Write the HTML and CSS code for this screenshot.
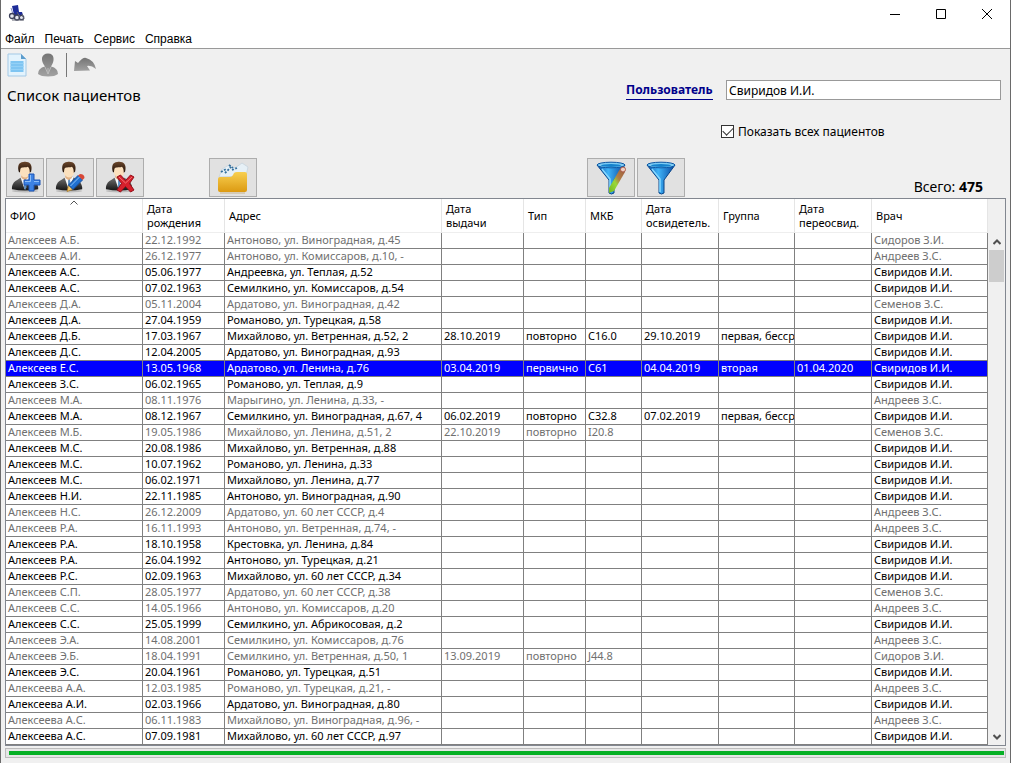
FILE: index.html
```html
<!DOCTYPE html>
<html lang="ru">
<head>
<meta charset="utf-8">
<title>Список пациентов</title>
<link rel="stylesheet" href="styles.css">
</head>
<body>
<svg class="defs" aria-hidden="true">
  <defs>
    <linearGradient id="suit" x1="0" y1="0" x2="0" y2="1"><stop offset="0" stop-color="#777"/><stop offset="1" stop-color="#151515"/></linearGradient>
    <linearGradient id="hair" x1="0" y1="0" x2="0" y2="1"><stop offset="0" stop-color="#6a452a"/><stop offset="1" stop-color="#1d0f07"/></linearGradient>
    <linearGradient id="blue" x1="0" y1="0" x2="1" y2="0"><stop offset="0" stop-color="#0b4fa8"/><stop offset=".4" stop-color="#3fb4f8"/><stop offset="1" stop-color="#0746a0"/></linearGradient>
    <linearGradient id="folder" x1="0" y1="0" x2="0" y2="1"><stop offset="0" stop-color="#f8cf50"/><stop offset="1" stop-color="#dc9a12"/></linearGradient>
    <linearGradient id="gray" x1="0" y1="0" x2="0" y2="1"><stop offset="0" stop-color="#747474"/><stop offset="1" stop-color="#a2a2a2"/></linearGradient>
    <linearGradient id="stick" x1="1" y1="0" x2="0" y2="1"><stop offset="0" stop-color="#a05a3c"/><stop offset=".4" stop-color="#b08048"/><stop offset=".6" stop-color="#98d838"/><stop offset="1" stop-color="#70b820"/></linearGradient>
    <symbol id="person" viewBox="0 0 32 34">
      <ellipse cx="15" cy="32" rx="14" ry="1.500" fill="#bbb"/>
      <path d="M1 30V28Q2 22 7 20L12 16.500H18L23 19Q28 22 29 28V30Q15 33 1 30Z" fill="url(#suit)"/>
      <path d="M10 17L14.500 30L20 17Z" fill="#f4f8fc"/>
      <path d="M14 19H16L16.500 28L15 31L13.800 28Z" fill="#5f8fc0"/>
      <path d="M11 14H18V18L14.500 20.500L11 18Z" fill="#e2b184"/>
      <ellipse cx="15" cy="10.500" rx="5.700" ry="7" fill="#fbe0bd"/>
      <path d="M8.500 12C6.500 6 8 1.200 13 1C19 0 23.500 3 21.500 11L20 12.500C20 9 19.500 7 18 6C14 7.500 11 5.500 10 8.500L9.500 12Z" fill="url(#hair)"/>
    </symbol>
    <symbol id="funnel" viewBox="0 0 32 34">
      <path d="M2 4L14 19V32Q16.500 34 19 32V19L30 4Z" fill="url(#blue)" stroke="#084488"/>
      <path d="M7 8L15 18V31" fill="none" stroke="#86d8ff" stroke-width="1.500"/>
      <ellipse cx="16" cy="4" rx="14" ry="2.800" fill="#7cccf4" stroke="#0c56a4"/>
      <ellipse cx="16" cy="4.500" rx="10" ry="1.500" fill="#1682cc"/>
    </symbol>
  </defs>
</svg>
<div class="window">
  <header class="titlebar">
    <svg class="logo" viewBox="0 0 18 18" aria-hidden="true"><path d="M4 1L10 0L11 7H14L15 10H6Z" fill="#1d2b98"/><path d="M3 3L5 9" stroke="#8b93c8"/><g fill="#e4e6ee" stroke="#3b3f58" stroke-width="1.300"><circle cx="4" cy="11" r="2.500"/><circle cx="9" cy="12.500" r="2.500"/><circle cx="13.500" cy="12.500" r="2.200"/></g><path d="M4 15H16M9 7L12 12M14 9L16 14" stroke="#626573"/></svg>
    <div class="controls">
      <button aria-label="Свернуть"><svg viewBox="0 0 12 12"><path d="M1 6.500H11" stroke="#000" fill="none"/></svg></button>
      <button aria-label="Развернуть"><svg viewBox="0 0 12 12"><path d="M1.500 1.500H10.500V10.500H1.500Z" stroke="#000" fill="none"/></svg></button>
      <button aria-label="Закрыть"><svg viewBox="0 0 12 12"><path d="M1 1L11 11M11 1L1 11" stroke="#000" fill="none"/></svg></button>
    </div>
  </header>
  <nav class="menu"><button>Файл</button><button>Печать</button><button>Сервис</button><button>Справка</button></nav>
  <section class="top">
    <div>
      <div class="toolbar">
        <button aria-label="Новый документ"><svg width="20" height="24" viewBox="0 0 20 24"><path d="M1 1H14L19 6V23H1Z" fill="#e3f3fd" stroke="#a3c9e6"/><path d="M3.500 8H16.500V19H3.500Z" fill="#7fc5f2"/><path d="M3.500 10.500H16.500M3.500 13.500H16.500M3.500 16.500H16.500" stroke="#93d0f6"/><path d="M14 1V6H19Z" fill="#5c9ccc"/></svg></button>
        <button aria-label="Пациент"><svg width="22" height="24" viewBox="0 0 22 24"><path d="M1 21Q1 15 8 13.500Q4.500 9 5 5Q6 .500 11 .500Q16 .500 16.500 5Q17 9 14 13.500Q21 15 21 21Q18 23.500 11 23.500Q4 23.500 1 21Z" fill="url(#gray)"/><path d="M8 14L11 21L14 14M11 15V21" stroke="#bbb" fill="none"/></svg></button>
        <span class="divider"></span>
        <button aria-label="Отменить"><svg width="24" height="18" viewBox="0 0 24 18"><path d="M1 15L2 5L5 7Q10 1 13 2Q21 4 23 13Q18 9 14 10L17 14.500Z" fill="url(#gray)"/></svg></button>
      </div>
      <h1>Список пациентов</h1>
    </div>
    <div class="filters">
      <div class="user"><a href="#user" id="user-label">Пользователь</a><input type="text" id="user" value="Свиридов И.И." aria-labelledby="user-label"></div>
      <label class="check"><input type="checkbox" checked><span>Показать всех пациентов</span></label>
    </div>
  </section>
  <section class="actions">
    <button class="narrow" aria-label="Добавить пациента"><svg viewBox="0 0 32 34"><use href="#person" x="2" y="0" width="30" height="32"/><path d="M20 13H25V19H31V24H25V30H20V24H15V19H20Z" fill="#3c82e4" stroke="#1c55b4"/><path d="M21.500 14V20.500H16M25 20.500H30" stroke="#8bbcf8" fill="none"/></svg></button>
    <button aria-label="Изменить пациента"><svg viewBox="0 0 32 34"><use href="#person" x="1" y="0" width="30" height="32"/><path d="M13 30.500L14.500 24L19 28.500Z" fill="#f4ca72" stroke="#a27424" stroke-width=".7"/><path d="M14.500 24L24 14.500L28.500 19L19 28.500Z" fill="#2070d0" stroke="#164fa0"/><path d="M16.500 25L26 15.500" stroke="#8bc4f8"/><path d="M24 14.500L26 13Q30.500 13 30.500 17L28.500 19Z" fill="#d84838"/></svg></button>
    <button aria-label="Удалить пациента"><svg viewBox="0 0 32 34"><use href="#person" x="1" y="0" width="30" height="32"/><path d="M13 16L16.500 14L21.500 19.500L26.500 14L30 16L25.500 22.500L30 29L26.500 31L21.500 25.500L16.500 31L13 29L17.500 22.500Z" fill="#d6202c" stroke="#94101a"/><path d="M15 16L21.500 22L28 16" stroke="#f27474" fill="none"/></svg></button>
    <button class="folder" aria-label="Папка"><svg viewBox="0 0 32 34"><path d="M2 16L5 8L12 4L18 7L25 2L31 6L29 15Z" fill="#e6f0f6" stroke="#cdd8e0"/><path d="M4 11L9 8M8 12L14 6M15 9L20 7M12 4L16 7" stroke="#356f9c" stroke-width="1.800" stroke-dasharray="2 1.500"/><path d="M1 18Q1 16 3 16H13Q15 16 16 14L17 12Q18 11 20 11H28Q30 11 30 13V29Q30 31 28 31H3Q1 31 1 29Z" fill="url(#folder)"/><path d="M3 32H28" stroke="#c8b48b"/></svg></button>
    <button class="filter" aria-label="Изменить фильтр"><svg viewBox="0 0 32 34"><use href="#funnel"/><path d="M14 32V27L25 8L30 11L19 30Z" fill="url(#stick)"/><circle cx="28" cy="8.500" r="2.500" fill="#f0d0c4" stroke="#a85a48"/></svg></button>
    <button aria-label="Фильтр"><svg viewBox="0 0 32 34"><use href="#funnel"/></svg></button>
    <p class="total">Всего: <b>475</b></p>
  </section>
  <main class="grid">
    <table>
      <colgroup><col class="c-name"><col class="c-date"><col><col class="c-date"><col class="c-type"><col class="c-code"><col class="c-wide"><col class="c-group"><col class="c-wide"><col class="c-doctor"></colgroup>
      <thead><tr><th class="sorted">ФИО<svg viewBox="0 0 8 5"><path d="M.500 4.500L4 1L7.500 4.500" fill="none" stroke="#555"/></svg></th><th>Дата<br>рождения</th><th>Адрес</th><th>Дата<br>выдачи</th><th>Тип</th><th>МКБ</th><th>Дата<br>освидетель.</th><th>Группа</th><th>Дата<br>переосвид.</th><th>Врач</th></tr></thead>
      <tbody>
        <tr class="off"><td>Алексеев А.Б.<td>22.12.1992<td>Антоново, ул. Виноградная, д.45<td><td><td><td><td><td><td>Сидоров З.И.
        <tr class="off"><td>Алексеев А.И.<td>26.12.1977<td>Антоново, ул. Комиссаров, д.10, -<td><td><td><td><td><td><td>Андреев З.С.
        <tr><td>Алексеев А.С.<td>05.06.1977<td>Андреевка, ул. Теплая, д.52<td><td><td><td><td><td><td>Свиридов И.И.
        <tr><td>Алексеев А.С.<td>07.02.1963<td>Семилкино, ул. Комиссаров, д.54<td><td><td><td><td><td><td>Свиридов И.И.
        <tr class="off"><td>Алексеев Д.А.<td>05.11.2004<td>Ардатово, ул. Виноградная, д.42<td><td><td><td><td><td><td>Семенов З.С.
        <tr><td>Алексеев Д.А.<td>27.04.1959<td>Романово, ул. Турецкая, д.58<td><td><td><td><td><td><td>Свиридов И.И.
        <tr><td>Алексеев Д.Б.<td>17.03.1967<td>Михайлово, ул. Ветренная, д.52, 2<td>28.10.2019<td>повторно<td>C16.0<td>29.10.2019<td>первая, бессрочно<td><td>Свиридов И.И.
        <tr><td>Алексеев Д.С.<td>12.04.2005<td>Ардатово, ул. Виноградная, д.93<td><td><td><td><td><td><td>Свиридов И.И.
        <tr class="selected"><td>Алексеев Е.С.<td>13.05.1968<td>Ардатово, ул. Ленина, д.76<td>03.04.2019<td>первично<td>C61<td>04.04.2019<td>вторая<td>01.04.2020<td>Свиридов И.И.
        <tr><td>Алексеев З.С.<td>06.02.1965<td>Романово, ул. Теплая, д.9<td><td><td><td><td><td><td>Свиридов И.И.
        <tr class="off"><td>Алексеев М.А.<td>08.11.1976<td>Марыгино, ул. Ленина, д.33, -<td><td><td><td><td><td><td>Андреев З.С.
        <tr><td>Алексеев М.А.<td>08.12.1967<td>Семилкино, ул. Виноградная, д.67, 4<td>06.02.2019<td>повторно<td>C32.8<td>07.02.2019<td>первая, бессрочно<td><td>Свиридов И.И.
        <tr class="off"><td>Алексеев М.Б.<td>19.05.1986<td>Михайлово, ул. Ленина, д.51, 2<td>22.10.2019<td>повторно<td>I20.8<td><td><td><td>Семенов З.С.
        <tr><td>Алексеев М.С.<td>20.08.1986<td>Михайлово, ул. Ветренная, д.88<td><td><td><td><td><td><td>Свиридов И.И.
        <tr><td>Алексеев М.С.<td>10.07.1962<td>Романово, ул. Ленина, д.33<td><td><td><td><td><td><td>Свиридов И.И.
        <tr><td>Алексеев М.С.<td>06.02.1971<td>Михайлово, ул. Ленина, д.77<td><td><td><td><td><td><td>Свиридов И.И.
        <tr><td>Алексеев Н.И.<td>22.11.1985<td>Антоново, ул. Виноградная, д.90<td><td><td><td><td><td><td>Свиридов И.И.
        <tr class="off"><td>Алексеев Н.С.<td>26.12.2009<td>Ардатово, ул. 60 лет СССР, д.4<td><td><td><td><td><td><td>Андреев З.С.
        <tr class="off"><td>Алексеев Р.А.<td>16.11.1993<td>Антоново, ул. Ветренная, д.74, -<td><td><td><td><td><td><td>Андреев З.С.
        <tr><td>Алексеев Р.А.<td>18.10.1958<td>Крестовка, ул. Ленина, д.84<td><td><td><td><td><td><td>Свиридов И.И.
        <tr><td>Алексеев Р.А.<td>26.04.1992<td>Антоново, ул. Турецкая, д.21<td><td><td><td><td><td><td>Свиридов И.И.
        <tr><td>Алексеев Р.С.<td>02.09.1963<td>Михайлово, ул. 60 лет СССР, д.34<td><td><td><td><td><td><td>Свиридов И.И.
        <tr class="off"><td>Алексеев С.П.<td>28.05.1977<td>Ардатово, ул. 60 лет СССР, д.38<td><td><td><td><td><td><td>Семенов З.С.
        <tr class="off"><td>Алексеев С.С.<td>14.05.1966<td>Антоново, ул. Комиссаров, д.20<td><td><td><td><td><td><td>Андреев З.С.
        <tr><td>Алексеев С.С.<td>25.05.1999<td>Семилкино, ул. Абрикосовая, д.2<td><td><td><td><td><td><td>Свиридов И.И.
        <tr class="off"><td>Алексеев Э.А.<td>14.08.2001<td>Семилкино, ул. Комиссаров, д.76<td><td><td><td><td><td><td>Андреев З.С.
        <tr class="off"><td>Алексеев Э.Б.<td>18.04.1991<td>Семилкино, ул. Ветренная, д.50, 1<td>13.09.2019<td>повторно<td>J44.8<td><td><td><td>Сидоров З.И.
        <tr><td>Алексеев Э.С.<td>20.04.1961<td>Романово, ул. Турецкая, д.51<td><td><td><td><td><td><td>Свиридов И.И.
        <tr class="off"><td>Алексеева А.А.<td>12.03.1985<td>Романово, ул. Турецкая, д.21, -<td><td><td><td><td><td><td>Андреев З.С.
        <tr><td>Алексеева А.И.<td>02.03.1966<td>Ардатово, ул. Виноградная, д.80<td><td><td><td><td><td><td>Свиридов И.И.
        <tr class="off"><td>Алексеева А.С.<td>06.11.1983<td>Михайлово, ул. Виноградная, д.96, -<td><td><td><td><td><td><td>Андреев З.С.
        <tr><td>Алексеева А.С.<td>07.09.1981<td>Михайлово, ул. 60 лет СССР, д.97<td><td><td><td><td><td><td>Свиридов И.И.
      </tbody>
    </table>
    <div class="scrollbar">
      <button aria-label="Вверх"><svg viewBox="0 0 8 6"><path d="M.500 5L4 1.500L7.500 5" fill="none" stroke="#505050" stroke-width="2"/></svg></button>
      <div class="track"><div class="thumb"></div></div>
      <button aria-label="Вниз"><svg viewBox="0 0 8 6"><path d="M.500 1L4 4.500L7.500 1" fill="none" stroke="#505050" stroke-width="2"/></svg></button>
    </div>
  </main>
  <progress value="100" max="100" aria-label="Загрузка"></progress>
</div>
</body>
</html>
```
FILE: styles.css
```css
* { box-sizing: border-box; }
body { margin: 0; background: #f0f0f0; color: #000; font: 11px/14px "Noto Sans", sans-serif; }
button { margin: 0; padding: 0; border: 0; background: none; font: inherit; color: inherit; }
svg { display: block; }
.defs { position: absolute; width: 0; height: 0; }
.window { min-height: 100vh; display: flex; flex-direction: column; border: 1px solid #6a6a6a; border-top: 0; }

.titlebar { display: flex; justify-content: space-between; align-items: center; height: 27px; padding-left: 7px; background: #fff; }
.logo { width: 18px; height: 18px; }
.controls { display: flex; }
.controls button { width: 46px; height: 27px; display: grid; place-items: center; }
.controls svg { width: 12px; height: 12px; }
.menu { display: flex; gap: 10px; height: 22px; padding-left: 4px; background: #fff; border-bottom: 1px solid #999; font: 12px/24px "Liberation Sans", sans-serif; }

.top { display: flex; justify-content: space-between; height: 109px; padding: 4px 9px 0 6px; }
.toolbar { display: flex; align-items: center; height: 24px; }
.toolbar button { margin-right: 7px; }
.toolbar button + button { margin-left: 3px; }
.divider { width: 1px; height: 24px; margin-right: 6px; background: #777; }
h1 { margin: 7px 0 0; font-size: 15px; line-height: 22px; font-weight: 400; }
.filters { width: 375px; padding-top: 27px; }
.user { display: flex; align-items: center; justify-content: space-between; font-size: 12px; }
.user a { font-weight: 700; line-height: 18px; color: #00008b; text-decoration: none; border-bottom: 1px solid #00008b; }
.user input { width: 275px; height: 20px; padding: 0 2px; border: 1px solid #999; background: #fff; font: inherit; color: #000; }
.check { display: flex; align-items: center; gap: 4px; margin: 23px 0 0 95px; font-size: 12px; line-height: 17px; }
.check input { appearance: none; width: 13px; height: 13px; margin: 0; display: grid; place-items: center; border: 1px solid #333; background: #fff; }
.check input:checked::before { content: ""; width: 9px; height: 5px; margin-bottom: 3px; border: solid #333; border-width: 0 0 1px 1px; transform: rotate(-45deg); }

.actions { display: flex; gap: 2px; padding: 0 27px 0 5px; }
.actions button { width: 48px; height: 39px; display: grid; place-items: center; border: 1px solid #adadad; background: #e1e1e1; }
.actions .narrow { width: 38px; }
.actions svg { width: 32px; height: 34px; }
.actions .folder { margin-left: 63px; }
.actions .filter { margin-left: auto; }
.total { width: 296px; margin: 0; padding-top: 19px; text-align: right; font-size: 14px; line-height: 20px; }

.grid { display: flex; margin: 1px 4px 0; border: 1px solid #828790; }
table { flex: 1; width: 0; table-layout: fixed; border-spacing: 0; }
.c-name { width: 137px; }
.c-date { width: 82px; }
.c-type { width: 62px; }
.c-code { width: 56px; }
.c-wide { width: 77px; }
.c-group { width: 76px; }
.c-doctor { width: 116px; }
th { position: relative; height: 34px; padding: 0 4px; background: #fff; border-right: 1px solid #e5e5e5; border-bottom: 1px solid #eee; font-weight: 400; text-align: left; white-space: nowrap; }
.sorted svg { position: absolute; top: 1px; left: calc(50% - 4px); width: 8px; height: 5px; }
td { height: 16px; padding: 0 0 1px 2px; overflow: hidden; background: #fff; border: solid #808080; border-width: 0 1px 1px 0; line-height: 14px; white-space: nowrap; }
.off { color: #707070; }
.selected td { background: #00f; color: #fff; }
.scrollbar { width: 17px; display: flex; flex-direction: column; padding-top: 34px; }
.scrollbar button { height: 17px; display: grid; place-items: center; }
.scrollbar svg { width: 8px; height: 6px; }
.track { flex: 1; padding: 0 1px; }
.thumb { height: 32px; background: #cdcdcd; }

progress { appearance: none; width: auto; height: 10px; margin: 2px 4px 5px; padding: 2px 1px 2px 3px; border: 1px solid #bcbcbc; background: #e6e6e6; }
progress::-webkit-progress-bar { background: #e6e6e6; }
progress::-webkit-progress-value { background: #06b025; }
```
